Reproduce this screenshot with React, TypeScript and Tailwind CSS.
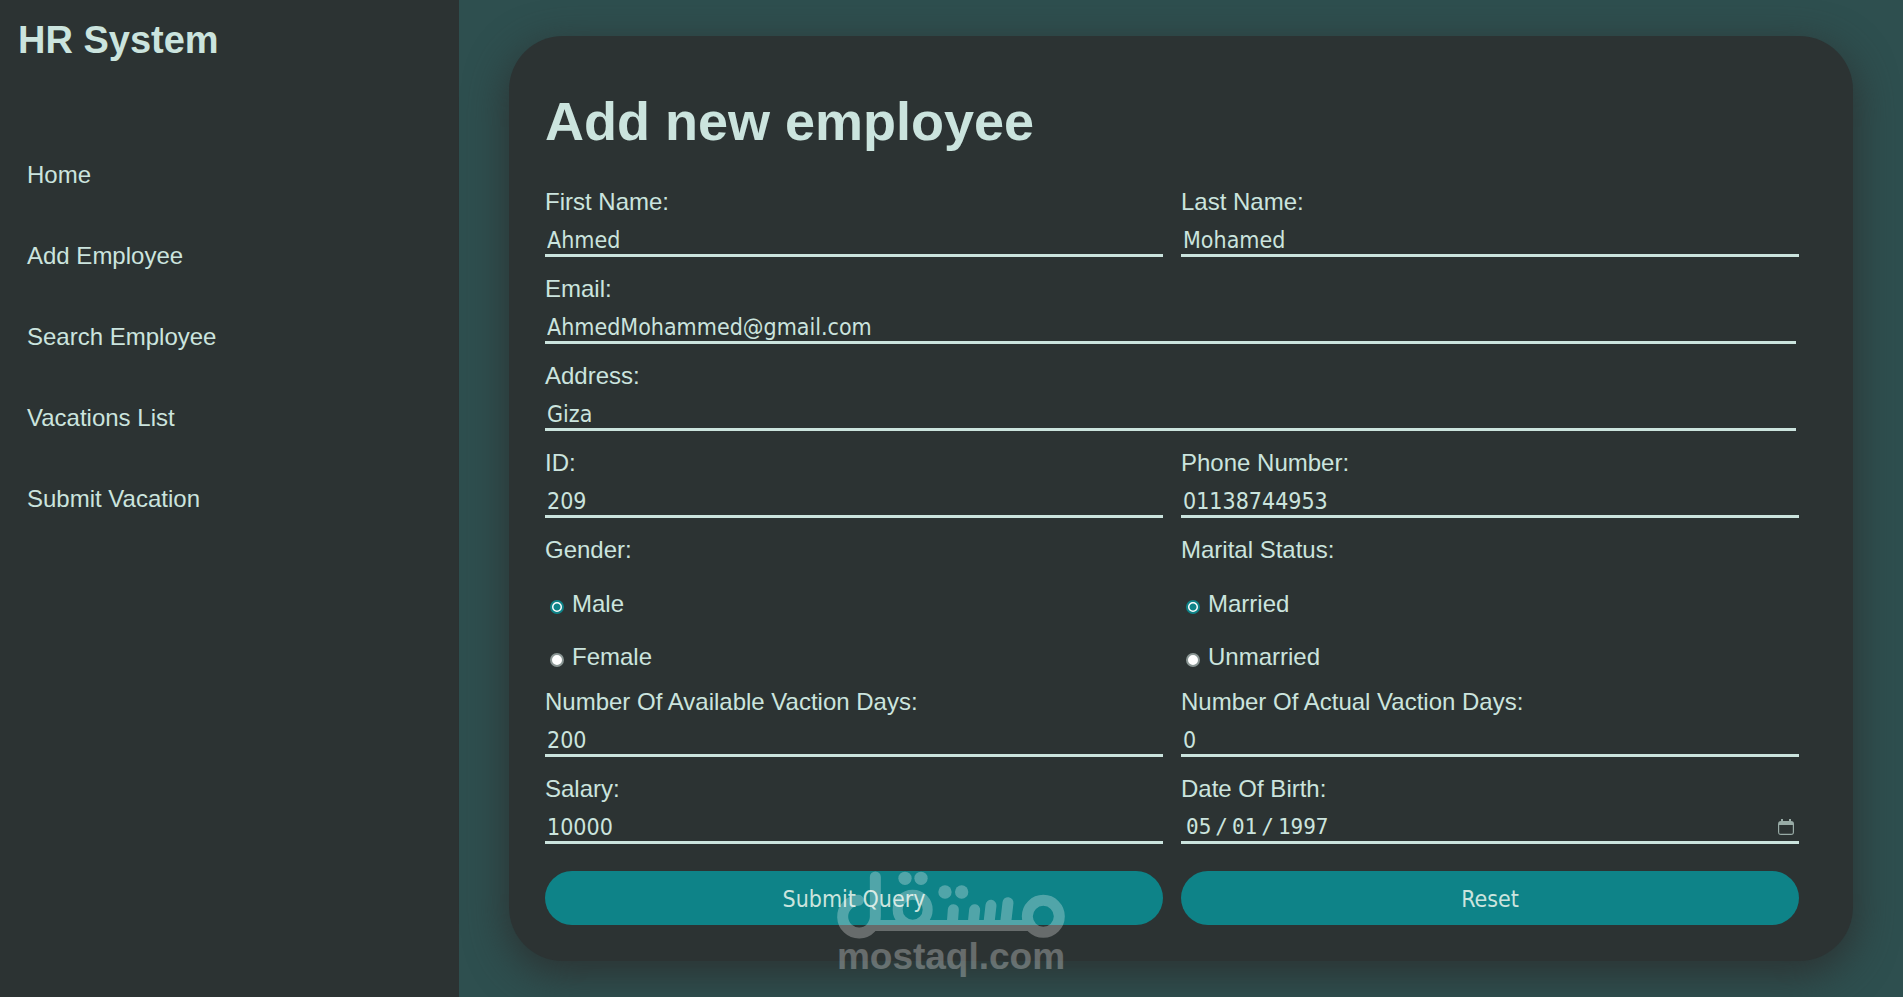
import { useId } from 'react';

const links = ['Home', 'Add Employee', 'Search Employee', 'Vacations List', 'Submit Vacation'];

interface FieldProps {
  label: string;
  value: string;
  type?: string;
  wide?: boolean;
}

function Field({ label, value, type = 'text', wide }: FieldProps) {
  const id = useId();
  return (
    <div className={wide ? 'col-span-2 mr-[3px] flex flex-col' : 'flex flex-col'}>
      <label htmlFor={id} className="leading-7">{label}</label>
      <input
        id={id}
        type={type}
        defaultValue={value}
        className="h-[41px] w-full border-b-[3px] border-[#CBE4DE] bg-transparent px-[2px] pt-[10px] font-['DejaVu_Sans_Condensed','DejaVu_Sans',sans-serif] text-[23px] outline-none"
      />
    </div>
  );
}

function DateField({ label, value }: { label: string; value: string }) {
  const id = useId();
  return (
    <div className="flex flex-col">
      <label htmlFor={id} className="leading-7">{label}</label>
      <div className="relative">
        <input
          id={id}
          type="date"
          defaultValue={value}
          className="block h-[41px] w-full border-b-[3px] border-[#CBE4DE] bg-transparent px-[4px] pt-[10px] font-['DejaVu_Sans_Mono',monospace] text-[21px] outline-none [&::-webkit-calendar-picker-indicator]:opacity-0 [&::-webkit-datetime-edit-text]:px-[3px]"
        />
        <svg viewBox="0 0 16 16" className="pointer-events-none absolute right-[5px] bottom-[9px] h-4 w-4" fill="#98aba6">
          <path fillRule="evenodd" d="M3 0h2v2h6V0h2v2a3 3 0 0 1 3 3v8a3 3 0 0 1-3 3H3a3 3 0 0 1-3-3V5a3 3 0 0 1 3-3V0zM1.200 6v7.500c0 .8.500 1.300 1.300 1.300h11c.8 0 1.300-.5 1.300-1.300V6H1.200z" />
        </svg>
      </div>
    </div>
  );
}

interface RadioGroupProps {
  legend: string;
  name: string;
  options: string[];
}

function RadioGroup({ legend, name, options }: RadioGroupProps) {
  return (
    <fieldset className="flex flex-col gap-[26px]">
      <legend className="contents">
        <span className="leading-7">{legend}</span>
      </legend>
      {options.map((option, i) => (
        <label key={option} className="flex items-center gap-2 pl-[5px] leading-[27px]">
          <input
            type="radio"
            name={name}
            defaultChecked={i === 0}
            className="mt-[6px] h-[14px] w-[14px] appearance-none rounded-full border-2 border-[#8a9694] bg-white checked:border-[#0E8388] checked:bg-[radial-gradient(circle,#0E8388_3px,#fff_4px)]"
          />
          {option}
        </label>
      ))}
    </fieldset>
  );
}

function Watermark() {
  return (
    <div className="pointer-events-none absolute bottom-[22px] left-[836px] w-[230px] opacity-[0.28]">
      <svg viewBox="108 63 690 206" className="block w-full" fill="none" stroke="#fff" strokeWidth="33" strokeLinecap="round">
        <path d="M226 84V202A49 49 0 1 1 175 154" />
        <path d="M210 229.500H690" strokeLinecap="butt" />
        <circle cx="338" cy="182" r="45" strokeWidth="30" />
        <circle cx="730" cy="202" r="48" />
        <path d="M460 182L457 222M524 182L520 222M573 169L567 222M624 161L617 222" />
        <g fill="#fff" stroke="none">
          <circle cx="315" cy="88" r="20" />
          <circle cx="363" cy="88" r="20" />
          <circle cx="435" cy="129" r="20" />
          <circle cx="485" cy="129" r="20" />
        </g>
      </svg>
      <span className="block text-center font-['Liberation_Sans',sans-serif] text-[37px] leading-9 font-bold text-white">mostaql.com</span>
    </div>
  );
}

export default function App() {
  return (
    <div className="relative flex min-h-screen bg-[#2E4F4F] font-['Liberation_Sans',Arial,sans-serif] text-2xl text-[#CBE4DE]">
      <aside className="w-[459px] shrink-0 bg-[#2C3333] p-[18px]">
        <h2 className="text-[38px] leading-[44px] font-bold">HR System</h2>
        <nav className="mt-[99px] flex flex-col items-start gap-[53px] px-[9px]">
          {links.map(link => (
            <a key={link} href="#" className="leading-7">{link}</a>
          ))}
        </nav>
      </aside>

      <main className="min-w-0 flex-1 px-[50px] py-9">
        <form className="rounded-[54px] bg-[#2C3333] pt-[54px] pr-[54px] pb-9 pl-9 shadow-[0_12px_40px_2px_#2C3333]">
          <h1 className="mb-9 text-[54px] leading-[62px] font-bold">Add new employee</h1>
          <div className="grid grid-cols-2 gap-[18px]">
            <Field label="First Name:" value="Ahmed" />
            <Field label="Last Name:" value="Mohamed" />
            <Field label="Email:" value="AhmedMohammed@gmail.com" type="email" wide />
            <Field label="Address:" value="Giza" wide />
            <Field label="ID:" value="209" />
            <Field label="Phone Number:" value="01138744953" type="tel" />
            <RadioGroup legend="Gender:" name="gender" options={['Male', 'Female']} />
            <RadioGroup legend="Marital Status:" name="marital" options={['Married', 'Unmarried']} />
            <Field label="Number Of Available Vaction Days:" value="200" />
            <Field label="Number Of Actual Vaction Days:" value="0" />
            <Field label="Salary:" value="10000" />
            <DateField label="Date Of Birth:" value="1997-05-01" />
          </div>
          <div className="mt-[27px] grid grid-cols-2 gap-[18px] font-['DejaVu_Sans_Condensed','DejaVu_Sans',sans-serif] text-[23px]">
            <button type="submit" className="h-[54px] rounded-full bg-[#0E8388] pt-[2px]">Submit Query</button>
            <button type="reset" className="h-[54px] rounded-full bg-[#0E8388] pt-[2px]">Reset</button>
          </div>
        </form>
      </main>
      <Watermark />
    </div>
  );
}
